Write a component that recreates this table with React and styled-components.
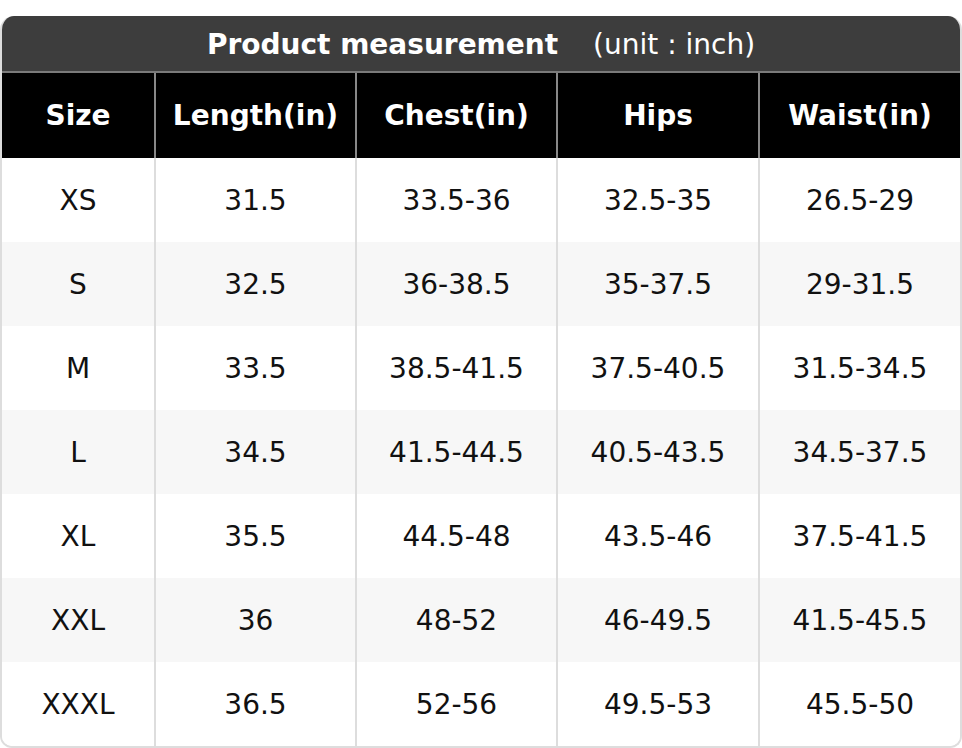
import styled, { createGlobalStyle } from "styled-components";

const GlobalStyle = createGlobalStyle`
  body {
    margin: 0;
    background: #fff;
    font-family: "DejaVu Sans", "Liberation Sans", sans-serif;
  }
`;

const columns = [
  { label: "Size", width: 153 },
  { label: "Length(in)", width: 201 },
  { label: "Chest(in)", width: 201 },
  { label: "Hips", width: 202 },
  { label: "Waist(in)", width: 201 },
];

const rows = [
  ["XS", "31.5", "33.5-36", "32.5-35", "26.5-29"],
  ["S", "32.5", "36-38.5", "35-37.5", "29-31.5"],
  ["M", "33.5", "38.5-41.5", "37.5-40.5", "31.5-34.5"],
  ["L", "34.5", "41.5-44.5", "40.5-43.5", "34.5-37.5"],
  ["XL", "35.5", "44.5-48", "43.5-46", "37.5-41.5"],
  ["XXL", "36", "48-52", "46-49.5", "41.5-45.5"],
  ["XXXL", "36.5", "52-56", "49.5-53", "45.5-50"],
];

const Page = styled.div`
  padding-top: 16px;
`;

const Card = styled.div`
  width: 962px;
  box-sizing: border-box;
  border: 2px solid #dddddd;
  border-top: none;
  border-radius: 14px 14px 12px 12px;
  overflow: hidden;
`;

const Title = styled.div`
  height: 57px;
  margin: 0 -2px;
  background: #3d3d3d;
  color: #fff;
  display: flex;
  align-items: center;
  justify-content: center;
  gap: 35px;
  font-size: 28px;
  border-bottom: 2px solid #7a7a7a;
  box-sizing: border-box;
  padding-top: 2px;
`;

const TitleMain = styled.span`
  font-weight: bold;
`;

const TitleUnit = styled.span`
  font-weight: normal;
`;

const Table = styled.table`
  width: 100%;
  border-collapse: collapse;
  table-layout: fixed;
`;

const HeadCell = styled.th`
  height: 85px;
  box-sizing: border-box;
  background: #000;
  color: #fff;
  font-size: 28px;
  font-weight: bold;
  text-align: center;
  padding: 0;
  border-left: 2px solid #888;
  &:first-child {
    border-left: none;
  }
`;

const Row = styled.tr`
  background: ${(p) => (p.$alt ? "#f7f7f7" : "#ffffff")};
`;

const Cell = styled.td`
  height: 84px;
  box-sizing: border-box;
  font-size: 28px;
  color: #111;
  text-align: center;
  padding: 0;
  border-left: 2px solid #dddddd;
  &:first-child {
    border-left: none;
  }
`;

export default function App() {
  return (
    <Page>
      <GlobalStyle />
      <Card>
        <Title>
          <TitleMain>Product measurement</TitleMain>
          <TitleUnit>(unit : inch)</TitleUnit>
        </Title>
        <Table>
          <colgroup>
            {columns.map((c) => (
              <col key={c.label} style={{ width: c.width }} />
            ))}
          </colgroup>
          <thead>
            <tr>
              {columns.map((c) => (
                <HeadCell key={c.label}>{c.label}</HeadCell>
              ))}
            </tr>
          </thead>
          <tbody>
            {rows.map((r, i) => (
              <Row key={r[0]} $alt={i % 2 === 1}>
                {r.map((v, j) => (
                  <Cell key={j}>{v}</Cell>
                ))}
              </Row>
            ))}
          </tbody>
        </Table>
      </Card>
    </Page>
  );
}
